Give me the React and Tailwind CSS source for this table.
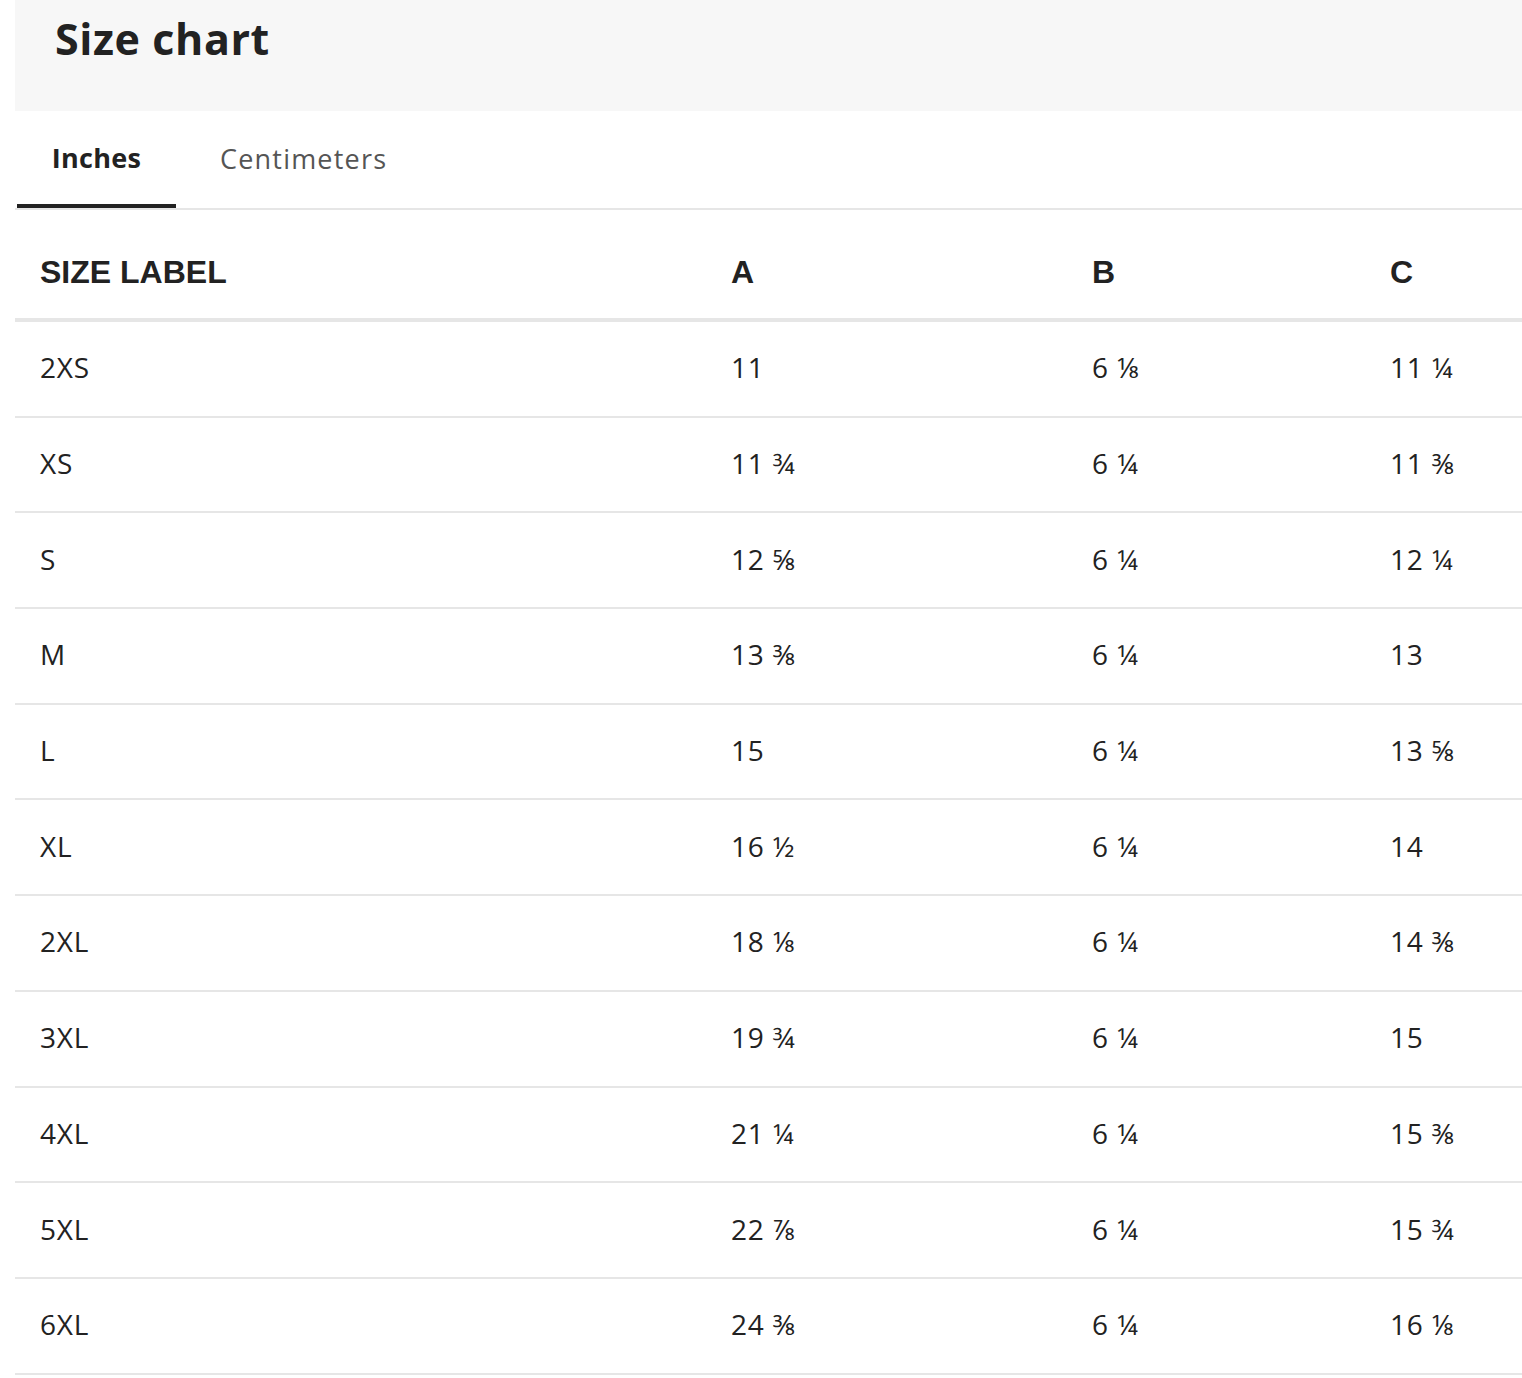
export default function App() {
  const rows = [
    ['2XS', '11', '6 ⅛', '11 ¼'],
    ['XS', '11 ¾', '6 ¼', '11 ⅜'],
    ['S', '12 ⅝', '6 ¼', '12 ¼'],
    ['M', '13 ⅜', '6 ¼', '13'],
    ['L', '15', '6 ¼', '13 ⅝'],
    ['XL', '16 ½', '6 ¼', '14'],
    ['2XL', '18 ⅛', '6 ¼', '14 ⅜'],
    ['3XL', '19 ¾', '6 ¼', '15'],
    ['4XL', '21 ¼', '6 ¼', '15 ⅜'],
    ['5XL', '22 ⅞', '6 ¼', '15 ¾'],
    ['6XL', '24 ⅜', '6 ¼', '16 ⅛'],
  ];

  const cols = 'grid grid-cols-[691px_361px_298px_1fr]';

  return (
    <div className="min-h-screen bg-white pl-[15px] text-[#222] font-['Open_Sans',sans-serif]">
      <div className="h-[111px] bg-[#f7f7f7] pl-[40px] pt-[9px]">
        <h1 className="text-[43px] font-bold leading-[60px] tracking-[0.6px]">Size chart</h1>
      </div>

      <div className="flex border-b-2 border-[#e6e6e6]">
        <button className="-mb-[2px] w-[159px] ml-[2px] h-[97px] pt-[2px] border-b-4 border-[#222] text-[27px] font-bold tracking-[0.3px] text-[#222]">
          Inches
        </button>
        <button className="h-[97px] pl-[44px] text-[27px] tracking-[1.2px] text-[#555]">Centimeters</button>
      </div>

      <div className={`${cols} h-[112px] items-center border-b-4 border-[#e6e6e6] pt-[16px] font-['Liberation_Sans',Arial,sans-serif] text-[32px] font-bold`}>
        <div className="pl-[25px]">SIZE LABEL</div>
        <div className="pl-[25px]">A</div>
        <div className="pl-[25px]">B</div>
        <div className="pl-[25px]">C</div>
      </div>

      {rows.map((r, i) => (
        <div key={i} className={`${cols} h-[95.7px] items-center border-b-2 border-[#e6e6e6] pb-[3px] text-[28px] tracking-[0.8px]`}>
          {r.map((c, j) => (
            <div key={j} className="pl-[25px]">{c}</div>
          ))}
        </div>
      ))}
    </div>
  );
}
